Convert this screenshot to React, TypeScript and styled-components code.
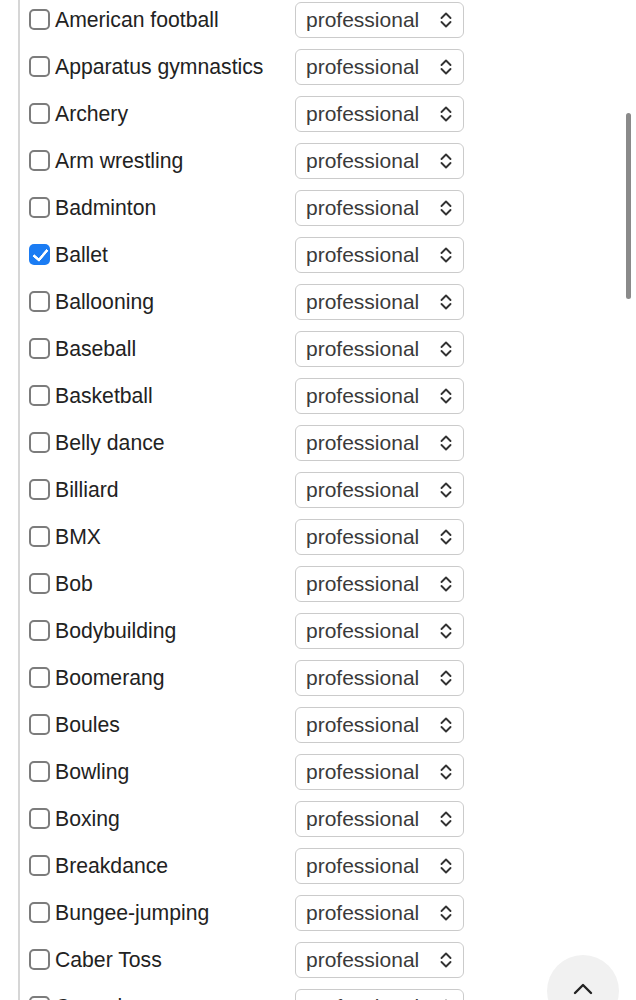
import React from "react";
import styled, { createGlobalStyle } from "styled-components";

const GlobalStyle = createGlobalStyle`
  html, body {
    margin: 0;
    padding: 0;
    background: #ffffff;
    overflow: hidden;
  }
  body {
    font-family: "Liberation Sans", Arial, Helvetica, sans-serif;
    color: #222222;
  }
`;

const Page = styled.div`
  height: 100vh;
  overflow: hidden;
  padding-left: 18px;
  box-sizing: border-box;
`;

const Fieldset = styled.div`
  border-left: 2px solid #d6d6d6;
  padding: 2px 0 0 9px;
  min-height: 100%;
  display: flex;
  flex-direction: column;
  gap: 11px;
`;

const Row = styled.div`
  display: flex;
  align-items: center;
  height: 36px;
`;

const Label = styled.label`
  width: 266px;
  display: flex;
  align-items: center;
  gap: 5px;
  font-size: 21.2px;
  color: #222222;
  margin-top: -1px;
`;

const Check = styled.input.attrs({ type: "checkbox" })`
  appearance: none;
  -webkit-appearance: none;
  margin: 0 0 1px 0;
  width: 21px;
  height: 21px;
  border: 2px solid #7c7c7c;
  border-radius: 5px;
  box-sizing: border-box;
  background: #ffffff;
  position: relative;
  flex: none;

  &:checked {
    border: none;
    background: #1b7cf3;
  }
  &:checked::after {
    content: "";
    position: absolute;
    left: 7px;
    top: 2px;
    width: 6px;
    height: 12px;
    border: solid #ffffff;
    border-width: 0 3px 3px 0;
    transform: rotate(40deg);
    border-radius: 1px;
  }
`;

const SelectBox = styled.div`
  width: 169px;
  height: 36px;
  box-sizing: border-box;
  border: 1px solid #cbcbcb;
  border-radius: 6px;
  display: flex;
  align-items: center;
  justify-content: space-between;
  padding: 0 10px 1px 10px;
  font-size: 21px;
  color: #3a3a3a;
  background: #ffffff;
`;

const Chevrons = () => (
  <svg width="14" height="18" viewBox="0 0 14 18" fill="none" style={{ marginTop: 1 }}>
    <path
      d="M2.5 7 L7 2.5 L11.5 7 M2.5 11 L7 15.5 L11.5 11"
      stroke="#333"
      strokeWidth="1.9"
      strokeLinecap="round"
      strokeLinejoin="round"
    />
  </svg>
);

const ScrollThumb = styled.div`
  position: fixed;
  top: 113px;
  right: 5px;
  width: 5px;
  height: 186px;
  border-radius: 3px;
  background: #8a8a8a;
`;

const TopButton = styled.button`
  position: fixed;
  left: 547px;
  top: 955px;
  width: 72px;
  height: 72px;
  border-radius: 50%;
  border: none;
  background: #f1f1f1;
  display: flex;
  align-items: flex-start;
  justify-content: center;
  padding-top: 27px;
  box-sizing: border-box;
`;

const sports = [
  "American football",
  "Apparatus gymnastics",
  "Archery",
  "Arm wrestling",
  "Badminton",
  "Ballet",
  "Ballooning",
  "Baseball",
  "Basketball",
  "Belly dance",
  "Billiard",
  "BMX",
  "Bob",
  "Bodybuilding",
  "Boomerang",
  "Boules",
  "Bowling",
  "Boxing",
  "Breakdance",
  "Bungee-jumping",
  "Caber Toss",
  "Canoeing",
  "Capoeira",
];

export default function App() {
  return (
    <>
      <GlobalStyle />
      <Page>
        <Fieldset>
          {sports.map((s) => (
            <Row key={s}>
              <Label>
                <Check defaultChecked={s === "Ballet"} />
                <span>{s}</span>
              </Label>
              <SelectBox>
                <span>professional</span>
                <Chevrons />
              </SelectBox>
            </Row>
          ))}
        </Fieldset>
      </Page>
      <ScrollThumb />
      <TopButton aria-label="Back to top">
        <svg width="22" height="14" viewBox="0 0 22 14" fill="none">
          <path d="M3 11 L11 3 L19 11" stroke="#222" strokeWidth="2.4" strokeLinecap="round" strokeLinejoin="round" />
        </svg>
      </TopButton>
    </>
  );
}
